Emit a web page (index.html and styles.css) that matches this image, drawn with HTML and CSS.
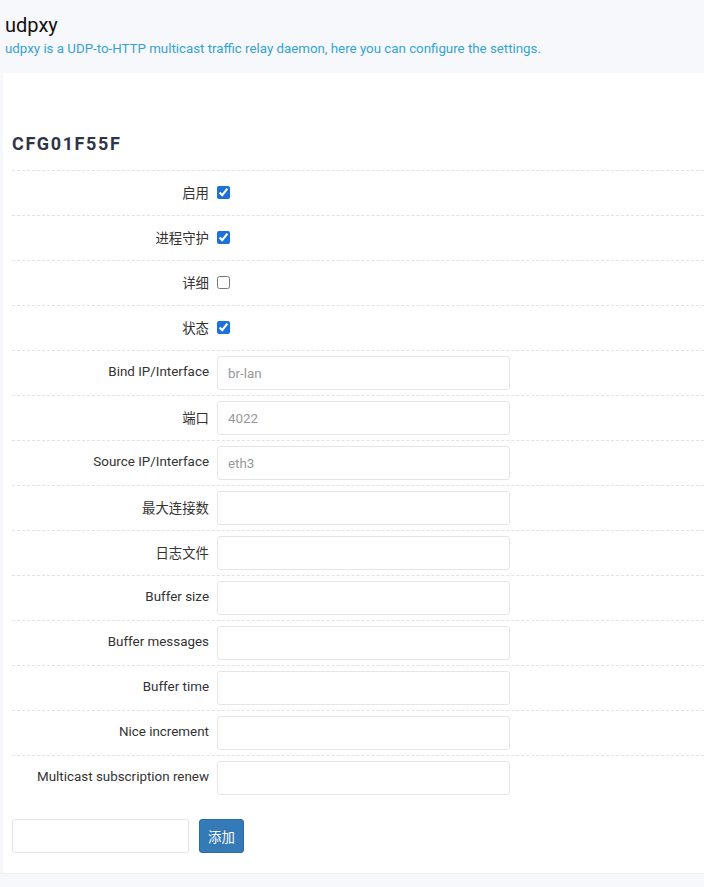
FILE: index.html
```html
<!DOCTYPE html>
<html lang="zh-CN">
<head>
    <meta charset="UTF-8">
    <meta name="viewport" content="width=device-width, initial-scale=1.0">
    <title>udpxy</title>
    <link rel="stylesheet" href="styles.css">
</head>
<body>

    <!-- Page title and description -->
    <div class="page-header">
        <h2 class="page-title">udpxy</h2>
        <div class="page-desc">udpxy is a UDP-to-HTTP multicast traffic relay daemon, here you can configure the settings.</div>
    </div>

    <!-- Config section -->
    <div class="cbi-section">
        <h3 class="section-title">CFG01F55F</h3>

        <div class="cbi-rows">
            <div class="cbi-row">
                <label class="cbi-label">启用</label>
                <div class="cbi-field"><input type="checkbox" class="cbi-check" checked></div>
            </div>
            <div class="cbi-row">
                <label class="cbi-label">进程守护</label>
                <div class="cbi-field"><input type="checkbox" class="cbi-check" checked></div>
            </div>
            <div class="cbi-row">
                <label class="cbi-label">详细</label>
                <div class="cbi-field"><input type="checkbox" class="cbi-check"></div>
            </div>
            <div class="cbi-row">
                <label class="cbi-label">状态</label>
                <div class="cbi-field"><input type="checkbox" class="cbi-check" checked></div>
            </div>
            <div class="cbi-row">
                <label class="cbi-label">Bind IP/Interface</label>
                <div class="cbi-field"><input type="text" class="cbi-input" placeholder="br-lan"></div>
            </div>
            <div class="cbi-row">
                <label class="cbi-label">端口</label>
                <div class="cbi-field"><input type="text" class="cbi-input" placeholder="4022"></div>
            </div>
            <div class="cbi-row">
                <label class="cbi-label">Source IP/Interface</label>
                <div class="cbi-field"><input type="text" class="cbi-input" placeholder="eth3"></div>
            </div>
            <div class="cbi-row">
                <label class="cbi-label">最大连接数</label>
                <div class="cbi-field"><input type="text" class="cbi-input"></div>
            </div>
            <div class="cbi-row">
                <label class="cbi-label">日志文件</label>
                <div class="cbi-field"><input type="text" class="cbi-input"></div>
            </div>
            <div class="cbi-row">
                <label class="cbi-label">Buffer size</label>
                <div class="cbi-field"><input type="text" class="cbi-input"></div>
            </div>
            <div class="cbi-row">
                <label class="cbi-label">Buffer messages</label>
                <div class="cbi-field"><input type="text" class="cbi-input"></div>
            </div>
            <div class="cbi-row">
                <label class="cbi-label">Buffer time</label>
                <div class="cbi-field"><input type="text" class="cbi-input"></div>
            </div>
            <div class="cbi-row">
                <label class="cbi-label">Nice increment</label>
                <div class="cbi-field"><input type="text" class="cbi-input"></div>
            </div>
            <div class="cbi-row last">
                <label class="cbi-label">Multicast subscription renew</label>
                <div class="cbi-field"><input type="text" class="cbi-input"></div>
            </div>
        </div>

        <!-- Add new section -->
        <div class="cbi-add">
            <input type="text" class="cbi-input add-input">
            <button class="cbi-button">添加</button>
        </div>
    </div>

    <div class="page-footer"></div>

</body>
</html>
```

FILE: styles.css
```css
body {
    margin: 0;
    padding: 0;
    background-color: #f7f8fb;
    font-family: Roboto, "Noto Sans CJK SC", sans-serif;
    font-size: 13.4px;
    color: #333;
}

.page-header {
    height: 73px;
    padding: 13px 5px 0 5px;
    box-sizing: border-box;
}

.page-title {
    margin: 0;
    font-size: 20px;
    font-weight: 400;
    line-height: 24px;
    color: #111;
}

.page-desc {
    margin-top: 4px;
    color: #33a3d4;
    font-size: 13.3px;
}

.cbi-section {
    background-color: #fff;
    margin-left: 3px;
    padding: 56px 0 20px 9px;
}

.section-title {
    margin: 0 0 11px 0;
    font-size: 18px;
    line-height: 30px;
    font-weight: 700;
    letter-spacing: 1.6px;
    color: #2f3447;
}

.cbi-rows {
    border-top: 1px dashed #e2e2e2;
}

.cbi-row {
    display: grid;
    grid-template-columns: 197px 1fr;
    column-gap: 8px;
    align-items: center;
    height: 44px;
    border-bottom: 1px dashed #e2e2e2;
}

.cbi-row.last {
    border-bottom: none;
}

.cbi-label {
    text-align: right;
    color: #333;
    margin-bottom: 3px;
}

.cbi-field {
    display: flex;
    align-items: center;
}

.cbi-check {
    width: 13px;
    height: 13px;
    margin: 0 0 2px 0;
    accent-color: #1d72d8;
}

.cbi-input {
    width: 293px;
    height: 34px;
    box-sizing: border-box;
    border: 1px solid #e6e6e6;
    border-radius: 3px;
    padding: 0 10px;
    font-family: Roboto, "Noto Sans CJK SC", sans-serif;
    font-size: 13.4px;
    color: #555;
    background: #fff;
}

.cbi-input::placeholder {
    color: #999;
}

.cbi-add {
    display: flex;
    align-items: center;
    gap: 10px;
    margin-top: 19px;
}

.add-input {
    width: 177px;
}

.cbi-button {
    height: 34px;
    padding: 0 8px;
    background-color: #337ab7;
    border: 1px solid #2e6da4;
    border-radius: 3px;
    color: #fff;
    font-family: Roboto, "Noto Sans CJK SC", sans-serif;
    font-size: 13.4px;
    cursor: pointer;
}

.page-footer {
    height: 20px;
    border-top: 1px solid #eef0f3;
}
```
